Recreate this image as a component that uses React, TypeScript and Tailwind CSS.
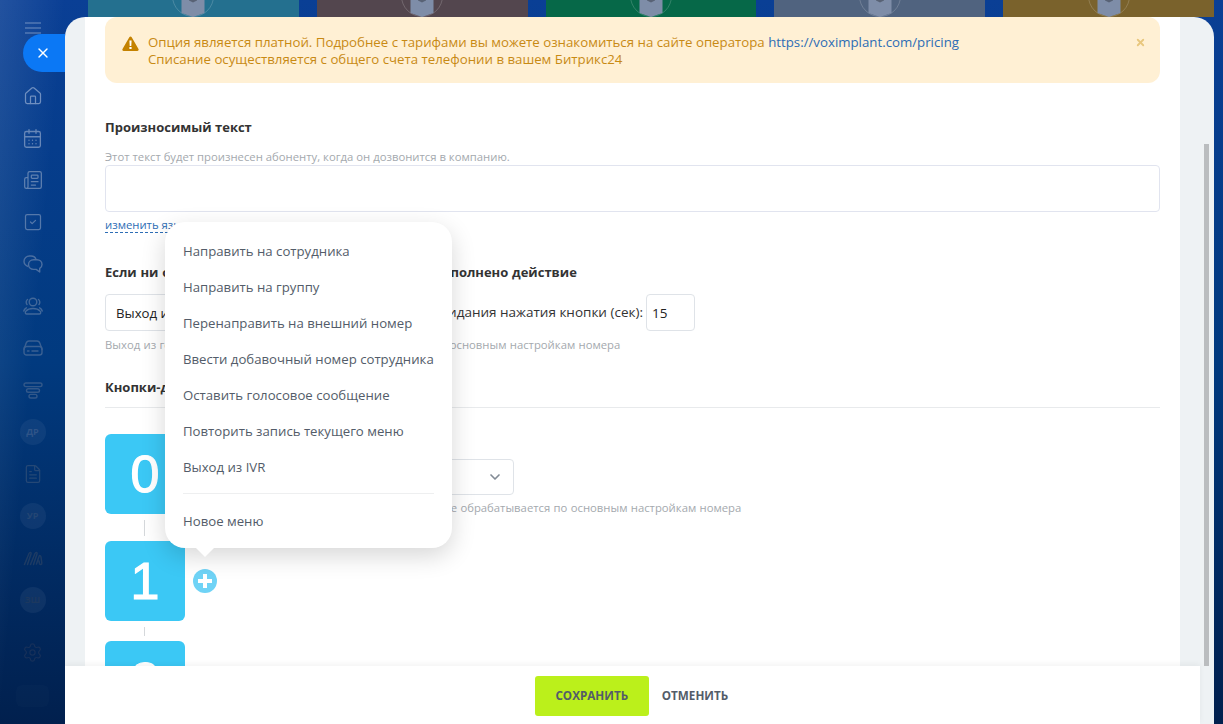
import { Home, CalendarDays, Newspaper, SquareCheck, FileText, Settings, X, ChevronDown } from "lucide-react";
import type { ReactNode } from "react";

const TILES = ["bg-[#24708f]", "bg-[#53464e]", "bg-[#066848]", "bg-[#50637f]", "bg-[#7a622c]"];

const MENU = [
  "Направить на сотрудника",
  "Направить на группу",
  "Перенаправить на внешний номер",
  "Ввести добавочный номер сотрудника",
  "Оставить голосовое сообщение",
  "Повторить запись текущего меню",
  "Выход из IVR",
];

const HINT = "Выход из голосового меню, звонок далее обрабатывается по основным настройкам номера";

function NavRow({ children, tone }: { children: ReactNode; tone: string }) {
  return <div className={`flex h-[42px] items-center justify-center ${tone}`}>{children}</div>;
}

function Badge({ label, tone }: { label: string; tone: string }) {
  return (
    <div className={`flex h-[26px] w-[26px] items-center justify-center rounded-full bg-white/5 text-[9px] font-bold ${tone}`}>
      {label}
    </div>
  );
}

function Sidebar() {
  return (
    <aside className="flex w-[65px] shrink-0 flex-col bg-linear-to-br from-white/10 via-transparent to-transparent">
      <div className="flex h-[34px] flex-col items-center gap-[3.5px] pt-[22px]">
        <span className="h-[1.5px] w-[16px] bg-white/20" />
        <span className="h-[1.5px] w-[16px] bg-white/20" />
        <span className="h-[1.5px] w-[16px] bg-white/20" />
      </div>
      <div className="ml-[23px] flex h-[38px] items-center justify-center rounded-l-[19px] bg-[#0b78f5] pr-[2px] text-white">
        <X size={16} strokeWidth={2} />
      </div>
      <div className="mt-[3px]">
        <NavRow tone="text-[#6f8fc0]"><Home size={20} strokeWidth={1.5} /></NavRow>
        <NavRow tone="text-[#6787b8]"><CalendarDays size={21} strokeWidth={1.5} /></NavRow>
        <NavRow tone="text-[#5f80b0]"><Newspaper size={20} strokeWidth={1.5} /></NavRow>
        <NavRow tone="text-[#5578aa]"><SquareCheck size={20} strokeWidth={1.5} /></NavRow>
        <NavRow tone="text-[#4b6fa2]">
          <svg width="20" height="18" viewBox="0 0 20 18" fill="none" stroke="currentColor" strokeWidth="1.4" strokeLinejoin="round">
            <path d="M5 11.500C2.500 10.500 1 8.500 1 6.300 1 3.300 3.500 1 6.500 1h1.500c2.500 0 4.500 1.500 5 3.500" />
            <path d="M10.500 4.800h3.500c2.800 0 5 2 5 4.600 0 1.700-1 3.200-2.300 4v3.600l-3.500-2.600h-2.700c-2.800 0-5-2-5-4.800 0-2.800 2.200-4.800 5-4.800z" />
          </svg>
        </NavRow>
        <NavRow tone="text-[#42689a]">
          <svg width="20" height="18" viewBox="0 0 20 18" fill="none" stroke="currentColor" strokeWidth="1.4" strokeLinecap="round">
            <circle cx="10" cy="5" r="3.800" />
            <path d="M3.500 17h13c1.500 0 1.500-2 .5-3-1.500-1.700-4-2.500-7-2.500S4.500 12.300 3 14c-1 1-1 3 .5 3z" />
            <path d="M4.500 2.500C3 3.500 2.800 6 4 7.500M15.500 2.500C17 3.500 17.200 6 16 7.500M.8 14c.3-1.500 1.200-2.500 2.500-3.200M19.200 14c-.3-1.500-1.200-2.500-2.500-3.200" />
          </svg>
        </NavRow>
        <NavRow tone="text-[#3a6092]">
          <svg width="20" height="16" viewBox="0 0 20 16" fill="none" stroke="currentColor" strokeWidth="1.4" strokeLinecap="round">
            <path d="M1 9.500 3 3.500C3.500 2 4.500 1 6 1h8c1.500 0 2.500 1 3 2.500l2 6" />
            <rect x="1" y="6.500" width="18" height="8.500" rx="2.500" />
            <path d="M4.500 11h1.500M9 11h6" />
          </svg>
        </NavRow>
        <NavRow tone="text-[#32588a]">
          <svg width="20" height="17" viewBox="0 0 20 17" fill="none" stroke="currentColor" strokeWidth="1.4">
            <rect x="1" y="1" width="18" height="3.600" rx="1.800" />
            <rect x="3.500" y="6.700" width="13" height="3.600" rx="1.800" />
            <rect x="6" y="12.400" width="8" height="3.600" rx="1.800" />
          </svg>
        </NavRow>
        <NavRow tone="text-[#2a4f80]"><Badge label="ДР" tone="text-[#2f5488]" /></NavRow>
        <NavRow tone="text-[#254876]"><FileText size={20} strokeWidth={1.5} /></NavRow>
        <NavRow tone="text-[#21416c]"><Badge label="УР" tone="text-[#244674]" /></NavRow>
        <NavRow tone="text-[#1d3b64]">
          <svg width="20" height="15" viewBox="0 0 20 15" fill="none" stroke="currentColor" strokeWidth="1.500" strokeLinecap="round">
            <path d="M1.500 13.500 6 2.500C6.800.8 8.500 1.300 8 3L4.500 13.500M7.500 13.500 12 2.500c.8-1.700 2.500-1.200 2 .5l-3.500 10.500" />
            <path d="M13.500 13 16 5.500c.6-1.500 1.800-1 2 .5l.8 6c.2 1.700-1.800 2.200-2.300.5L16 10" />
          </svg>
        </NavRow>
        <NavRow tone="text-[#1a355b]"><Badge label="ЗШ" tone="text-[#1c385f]" /></NavRow>
      </div>
      <div className="mt-[21px] flex justify-center text-[#16305a]"><Settings size={21} strokeWidth={1.4} /></div>
      <div className="mt-[22px] flex justify-center">
        <div className="h-[22px] w-[33px] rounded-md bg-white/[0.015]" />
      </div>
    </aside>
  );
}

function TileStrip() {
  return (
    <div className="flex h-[17px] shrink-0 gap-[18px] pl-[23px]">
      {TILES.map((tone) => (
        <div key={tone} className={`flex h-full w-[211px] justify-center overflow-hidden ${tone}`}>
          <svg width="42" height="17" viewBox="0 0 42 17" fill="none">
            <circle cx="21" cy="-4" r="20.500" stroke="white" strokeOpacity="0.18" />
            <path d="M9.500 0h23v13L21 17 9.500 13z" fill="#7e8da8" />
            <path d="M17 0h8v.500L21 2.500 17 .5z" fill="black" fillOpacity="0.3" />
          </svg>
        </div>
      ))}
    </div>
  );
}

function Heading({ children, className = "" }: { children: ReactNode; className?: string }) {
  return <h3 className={`text-[13px] leading-[18px] font-bold text-[#333] ${className}`}>{children}</h3>;
}

function Hint({ children, className = "" }: { children: ReactNode; className?: string }) {
  return <p className={`text-[11.3px] leading-[14px] whitespace-nowrap text-[#a4a9ae] ${className}`}>{children}</p>;
}

function KeyTile({ label }: { label: string }) {
  return (
    <div className="flex h-[80px] w-[80px] shrink-0 items-center justify-center rounded-[6px] bg-[#3bc8f5] font-['Liberation_Sans',sans-serif] text-[52px] text-white [-webkit-text-stroke:1.2px_#fff]">
      {label}
    </div>
  );
}

function Connector({ className }: { className: string }) {
  return <div className={`ml-[39px] w-px bg-[#d5d8db] ${className}`} />;
}

function Form() {
  return (
    <div className="min-w-0 flex-1 overflow-hidden bg-white px-[20px]">
      <div className="flex h-[66px] rounded-[12px] bg-[#fff0d4] px-[17px] pt-[17px] text-[13.25px] leading-[17px] text-[#c88a14]">
        <svg width="17" height="15" viewBox="0 0 17 15" className="mt-[2px] shrink-0">
          <path d="M8.500.5c.5 0 .9.3 1.200.8l6.800 11.600c.5.900-.1 2-1.200 2H1.700C.6 15-.0 13.800.5 12.900L7.300 1.300C7.600.8 8 .5 8.500.5z" fill="#c48200" />
          <path d="M7.400 4.500h2.200l-.3 5.500H7.700zM7.400 11h2.200v2H7.400z" fill="white" />
        </svg>
        <p className="ml-[9px] flex-1">
          Опция является платной. Подробнее с тарифами вы можете ознакомиться на сайте оператора{" "}
          <span className="text-[#2d6db5]">https://voximplant.com/pricing</span>
          <br />
          Списание осуществляется с общего счета телефонии в вашем Битрикс24
        </p>
        <X size={11} strokeWidth={4} className="mt-[3px] mr-[-3px] text-[#e8c77e]" />
      </div>

      <Heading className="mt-[35px]">Произносимый текст</Heading>
      <Hint className="mt-[14px]">Этот текст будет произнесен абоненту, когда он дозвонится в компанию.</Hint>
      <div className="mt-[1px] h-[47px] rounded-[4px] border border-[#e1e4ef]" />
      <div className="mt-[6px] flex">
        <span className="border-b border-dashed border-[#2d6db5] text-[11.3px] leading-[14px] text-[#2d6db5]">изменить язык</span>
      </div>

      <Heading className="mt-[30px] [word-spacing:0.4px]">Если ни одна кнопка не была нажата, то будет выполнено действие</Heading>
      <div className="mt-[13px] flex w-[590px] items-center">
        <div className="flex h-[37px] w-[290px] items-center rounded-[4px] border border-[#dfe3e8] px-[10px] pt-[3px] text-[13.2px] text-[#222]">
          Выход из IVR
        </div>
        <span className="ml-auto text-[13.5px] whitespace-nowrap text-[#333]">Время ожидания нажатия кнопки (сек):</span>
        <div className="ml-[3px] flex h-[37px] w-[49px] shrink-0 items-center rounded-[4px] border border-[#dfe3e8] px-[5px] pt-[1px] text-[13.5px] text-[#222]">
          15
        </div>
      </div>
      <Hint className="mt-[7px] [word-spacing:0.4px]">{HINT}</Hint>

      <Heading className="mt-[26px] border-b border-[#e8eaec] pb-[11px]">Кнопки-действия</Heading>

      <div className="mt-[26px] flex">
        <KeyTile label="0" />
        <div className="ml-[41px] pt-[25px]">
          <div className="flex h-[36px] w-[288px] items-center justify-between rounded-[4px] border border-[#dfe3e8] px-[10px] text-[13px] text-[#222]">
            Выход из IVR
            <ChevronDown size={16} strokeWidth={2.5} className="text-[#828b95]" />
          </div>
          <Hint className="mt-[6px] [word-spacing:0.4px]">{HINT}</Hint>
        </div>
      </div>
      <Connector className="mt-[5px] h-[16px]" />
      <div className="mt-[5px] flex items-center">
        <KeyTile label="1" />
        <span className="ml-[8px] flex h-[24px] w-[24px] items-center justify-center rounded-full bg-[#6fd3f6]">
          <svg width="14" height="14" viewBox="0 0 14 14" fill="white"><path d="M5 0h4v5h5v4H9v5H5V9H0V5h5z" /></svg>
        </span>
      </div>
      <Connector className="mt-[6px] h-[9px]" />
      <div className="mt-[5px]"><KeyTile label="2" /></div>
    </div>
  );
}

function Popup() {
  return (
    <div className="absolute top-[222px] left-[165px] w-[287px] rounded-[20px] bg-white px-[18px] pt-[11px] pb-[8px] text-[13.2px] text-[#535c69] shadow-[0_8px_24px_rgba(0,0,0,0.16)]">
      {MENU.map((item) => (
        <div key={item} className="flex h-[36px] items-center pt-[1px] whitespace-nowrap">{item}</div>
      ))}
      <div className="mt-[8px] mb-[10px] border-t border-[#eeeff0]" />
      <div className="flex h-[36px] items-center">Новое меню</div>
      <div className="absolute top-full left-[31px] h-0 w-0 border-x-[9px] border-t-[9px] border-x-transparent border-t-white" />
    </div>
  );
}

export default function App() {
  return (
    <div className="relative flex h-screen w-full overflow-hidden bg-linear-to-b from-[#0a3f95] via-[#013a7f] to-[#01204e] font-['Open_Sans',sans-serif]">
      <Sidebar />
      <div className="flex min-w-0 flex-1 flex-col pr-[9px]">
        <TileStrip />
        <div className="flex min-h-0 flex-1 flex-col overflow-hidden rounded-t-[20px] bg-[#eef2f4]">
          <div className="flex min-h-0 flex-1 pl-[20px]">
            <Form />
            <div className="w-[34px] shrink-0 pt-[127px] pl-[24px]">
              <div className="h-full w-[5px] bg-[#babdbf]" />
            </div>
          </div>
          <div className="mr-[14px] flex h-[58px] shrink-0 justify-center bg-white pt-[10px] pr-[2px] shadow-[0_-2px_6px_rgba(0,0,0,0.05)]">
            <button type="button" className="h-[40px] w-[114px] rounded-[3px] bg-[#bbf01b] text-[11.7px] font-bold text-[#535c69]">
              СОХРАНИТЬ
            </button>
            <button type="button" className="ml-[13px] h-[40px] text-[11.7px] font-bold text-[#535c69]">ОТМЕНИТЬ</button>
          </div>
        </div>
      </div>
      <Popup />
    </div>
  );
}
